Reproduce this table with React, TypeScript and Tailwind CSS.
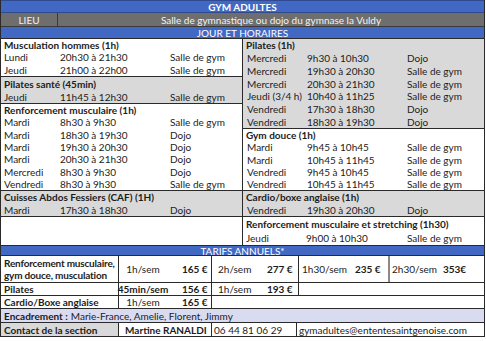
import React from "react";

type Slot = [string, string, string];

type Section = {
  title: string;
  slots: Slot[];
  h: string;
  gray?: boolean;
};

const LEFT: Section[] = [
  {
    title: "Musculation hommes (1h)",
    h: "h-[38px]",
    slots: [
      ["Lundi", "20h30 à 21h30", "Salle de gym"],
      ["Jeudi", "21h00 à 22h00", "Salle de gym"],
    ],
  },
  {
    title: "Pilates santé (45min)",
    h: "h-[27px]",
    gray: true,
    slots: [["Jeudi", "11h45 à 12h30", "Salle de gym"]],
  },
  {
    title: "Renforcement musculaire (1h)",
    h: "h-[87px]",
    slots: [
      ["Mardi", "8h30 à 9h30", "Salle de gym"],
      ["Mardi", "18h30 à 19h30", "Dojo"],
      ["Mardi", "19h30 à 20h30", "Dojo"],
      ["Mardi", "20h30 à 21h30", "Dojo"],
      ["Mercredi", "8h30 à 9h30", "Dojo"],
      ["Vendredi", "8h30 à 9h30", "Salle de gym"],
    ],
  },
  {
    title: "Cuisses Abdos Fessiers (CAF) (1H)",
    h: "h-[26px]",
    gray: true,
    slots: [["Mardi", "17h30 à 18h30", "Dojo"]],
  },
];

const RIGHT: Section[] = [
  {
    title: "Pilates (1h)",
    h: "h-[90px]",
    gray: true,
    slots: [
      ["Mercredi", "9h30 à 10h30", "Dojo"],
      ["Mercredi", "19h30 à 20h30", "Salle de gym"],
      ["Mercredi", "20h30 à 21h30", "Salle de gym"],
      ["Jeudi (3/4 h)", "10h40 à 11h25", "Salle de gym"],
      ["Vendredi", "17h30 à 18h30", "Dojo"],
      ["Vendredi", "18h30 à 19h30", "Dojo"],
    ],
  },
  {
    title: "Gym douce (1h)",
    h: "h-[62px]",
    slots: [
      ["Mardi", "9h45 à 10h45", "Salle de gym"],
      ["Mardi", "10h45 à 11h45", "Salle de gym"],
      ["Vendredi", "9h45 à 10h45", "Salle de gym"],
      ["Vendredi", "10h45 à 11h45", "Salle de gym"],
    ],
  },
  {
    title: "Cardio/boxe anglaise (1h)",
    h: "h-[26px]",
    gray: true,
    slots: [["Vendredi", "19h30 à 20h30", "Dojo"]],
  },
];

function Block({ s, side }: { s: Section; side: "l" | "r" }) {
  const cols =
    side === "l" ? "grid-cols-[56px_110px_1fr] pl-[3px]" : "grid-cols-[60px_100px_1fr] pl-[4px]";
  return (
    <div
      className={`${s.h} flex flex-col border-b border-[#2a2a2a] ${s.gray ? "bg-[#d9d9d9]" : "bg-white"}`}
    >
      <div className="flex-1 flex items-center font-bold pl-[3px] whitespace-nowrap">{s.title}</div>
      {s.slots.map((r, i) => (
        <div key={i} className={`flex-1 grid items-center whitespace-nowrap ${cols}`}>
          <span>{r[0]}</span>
          <span>{r[1]}</span>
          <span>{r[2]}</span>
        </div>
      ))}
    </div>
  );
}

// per-hour price cell: label box then bold amount
function Price({
  label,
  price,
  box,
  center,
  bold,
}: {
  label: string;
  price: string;
  box: string;
  center?: boolean;
  bold?: boolean;
}) {
  return (
    <div className="flex items-center h-full whitespace-nowrap">
      <span className={`${box} flex shrink-0 ${center ? "justify-center" : ""} ${bold ? "font-bold" : ""}`}>
        {label}
      </span>
      <span className="font-bold">{price}</span>
    </div>
  );
}

export default function App() {
  return (
    <div className="w-[486px] h-[341px] bg-white text-[10px] leading-none text-[#1c1c1c] font-['Lato','Liberation_Sans',sans-serif]">
      <div className="w-[485px] border-l border-r border-[#2a2a2a]">
        {/* Title */}
        <div className="h-[13px] bg-[#4169c4] border-t border-b border-[#2f4a8f] flex items-center justify-center text-white font-bold">
          GYM ADULTES
        </div>
        {/* Lieu */}
        <div className="h-[14px] bg-[#6e6e6e] border-b border-[#3a3a3a] flex text-[#f2f2f2]">
          <div className="w-[57px] border-r border-[#3a3a3a] flex items-center justify-center">LIEU</div>
          <div className="flex-1 flex items-center justify-center">
            Salle de gymnastique ou dojo du gymnase la Vuldy
          </div>
        </div>
        <div className="h-[12px] bg-[#4169c4] border-b border-[#2a2a2a] flex items-center justify-center text-white">
          JOUR ET HORAIRES
        </div>

        {/* Schedule */}
        <div className="flex">
          <div className="w-[242px] border-r border-[#2a2a2a]">
            {LEFT.map((s) => (
              <Block key={s.title} s={s} side="l" />
            ))}
            <div className="h-[28px]" />
          </div>
          <div className="flex-1">
            {RIGHT.map((s) => (
              <Block key={s.title} s={s} side="r" />
            ))}
            <div className="h-[28px] flex flex-col whitespace-nowrap">
              <div className="h-[13px] flex items-center font-bold pl-[3px]">
                Renforcement musculaire et stretching (1h30)
              </div>
              <div className="flex-1 grid grid-cols-[60px_100px_1fr] items-center pl-[3px]">
                <span>Jeudi</span>
                <span>9h00 à 10h30</span>
                <span className="pl-[1px]">Salle de gym</span>
              </div>
            </div>
          </div>
        </div>

        {/* Tarifs */}
        <div className="h-[11px] bg-[#4169c4] border-t border-b border-[#2a2a2a] flex items-center justify-center text-white">
          TARIFS ANNUELS*
        </div>
        <div className="grid grid-cols-[118px_93px_87px_91px_96px] h-[27px] border-b border-[#2a2a2a]">
          <div className="border-r border-[#2a2a2a] font-bold pl-[3px] leading-[12px] flex flex-col justify-center whitespace-nowrap tracking-[-0.2px]">
            <span>Renforcement musculaire,</span>
            <span>gym douce, musculation</span>
          </div>
          <div className="border-r border-[#2a2a2a]">
            <Price label="1h/sem" price="165 €" box="w-[48px] mr-[15px]" center />
          </div>
          <div className="border-r border-[#2a2a2a]">
            <Price label="2h/sem" price="277 €" box="w-[55px] pl-[6px]" />
          </div>
          <div className="border-r-2 border-[#8a8a8a]">
            <Price label="1h30/sem" price="235 €" box="w-[56px] pl-[3px]" />
          </div>
          <div>
            <Price label="2h30/sem" price="353€" box="min-w-[41px] pl-[2px] pr-[6px]" />
          </div>
        </div>
        <div className="grid grid-cols-[118px_93px_87px_1fr] h-[13px] border-b border-[#2a2a2a]">
          <div className="border-r border-[#2a2a2a] font-bold pl-[3px] flex items-center">Pilates</div>
          <div className="border-r border-[#2a2a2a]">
            <Price label="45min/sem" price="156 €" box="w-[48px] mr-[15px]" center bold />
          </div>
          <div className="border-r border-[#2a2a2a]">
            <Price label="1h/sem" price="193 €" box="w-[55px] pl-[6px]" />
          </div>
          <div />
        </div>
        <div className="grid grid-cols-[118px_93px_1fr] h-[13px] border-b border-[#2a2a2a]">
          <div className="border-r border-[#2a2a2a] font-bold pl-[3px] flex items-center whitespace-nowrap">
            Cardio/Boxe anglaise
          </div>
          <div className="border-r border-[#2a2a2a]">
            <Price label="1h/sem" price="165 €" box="w-[48px] mr-[15px]" center />
          </div>
          <div />
        </div>
        <div className="h-[14px] bg-[#d9dbf0] border-b border-[#2a2a2a] flex items-center pl-[3px] whitespace-nowrap">
          <span className="font-bold">Encadrement :</span>
          <span className="ml-[3px]">Marie-France, Amelie, Florent, Jimmy</span>
        </div>
        <div className="grid grid-cols-[118px_93px_85px_1fr] h-[14px] border-b border-[#2a2a2a] whitespace-nowrap">
          <div className="bg-[#d9d9d9] border-r border-[#2a2a2a] font-bold pl-[3px] flex items-center">
            Contact de la section
          </div>
          <div className="border-r border-[#2a2a2a] font-bold pl-[6px] flex items-center">Martine RANALDI</div>
          <div className="border-r border-[#2a2a2a] pl-[2px] flex items-center">06 44 81 06 29</div>
          <div className="pl-[2px] flex items-center">gymadultes@ententesaintgenoise.com</div>
        </div>
      </div>
    </div>
  );
}
